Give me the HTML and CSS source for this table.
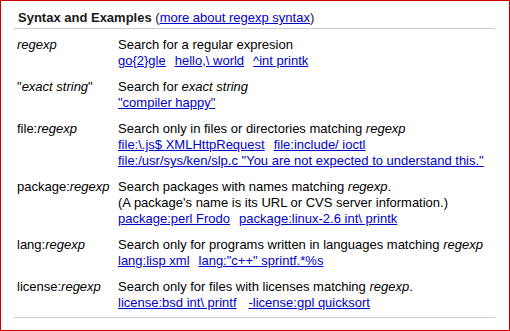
FILE: index.html
```html
<!DOCTYPE html>
<html>
<head>
<meta charset="utf-8">
<link rel="stylesheet" href="styles.css">
</head>
<body>
<div class="frame">
  <div class="panel">
    <div class="head"><b>Syntax and Examples</b> (<a href="#">more about regexp syntax</a>)</div>
    <div class="rows">
      <div class="label"><i>regexp</i></div>
      <div class="desc">
        <div>Search for a regular expresion</div>
        <div class="links"><a href="#">go{2}gle</a><a href="#">hello,\ world</a><a href="#">^int printk</a></div>
      </div>

      <div class="label">"<i>exact string</i>"</div>
      <div class="desc">
        <div>Search for <i>exact string</i></div>
        <div class="links"><a href="#">"compiler happy"</a></div>
      </div>

      <div class="label">file:<i>regexp</i></div>
      <div class="desc">
        <div>Search only in files or directories matching <i>regexp</i></div>
        <div class="links"><a href="#">file:\.js$ XMLHttpRequest</a><a href="#">file:include/ ioctl</a><a href="#">file:/usr/sys/ken/slp.c "You are not expected to understand this."</a></div>
      </div>

      <div class="label">package:<i>regexp</i></div>
      <div class="desc">
        <div>Search packages with names matching <i>regexp</i>.</div>
        <div>(A package's name is its URL or CVS server information.)</div>
        <div class="links"><a href="#">package:perl Frodo</a><a href="#">package:linux-2.6 int\ printk</a></div>
      </div>

      <div class="label">lang:<i>regexp</i></div>
      <div class="desc">
        <div>Search only for programs written in languages matching <i>regexp</i></div>
        <div class="links"><a href="#">lang:lisp xml</a><a href="#">lang:"c++" sprintf.*%s</a></div>
      </div>

      <div class="label">license:<i>regexp</i></div>
      <div class="desc">
        <div>Search only for files with licenses matching <i>regexp</i>.</div>
        <div class="links wide"><a href="#">license:bsd int\ printf</a><a href="#">-license:gpl quicksort</a></div>
      </div>
    </div>
  </div>
</div>
</body>
</html>
```

FILE: styles.css
```css
html, body {
  margin: 0;
  padding: 0;
  background: #fff;
}

body {
  font-family: "Liberation Sans", Arial, sans-serif;
  font-size: 13px;
  line-height: 16px;
  color: #000;
}

.frame {
  width: 510px;
  height: 331px;
  box-sizing: border-box;
  border: 1px solid #cc0000;
  padding: 9px 14px 0 13px;
}

.panel {
  border-bottom: 1px solid #cccccc;
  padding-bottom: 6px;
}

.head {
  padding: 0 0 2px 4px;
  border-bottom: 1px solid #cccccc;
  color: #1a1a1a;
}

.head b {
  font-weight: bold;
}

a {
  color: #0000cc;
  text-decoration: underline;
}

.rows {
  display: grid;
  grid-template-columns: 101px 1fr;
  row-gap: 10px;
  padding: 8px 0 0 3px;
}

.label {
  white-space: nowrap;
}

.links {
  display: flex;
  flex-wrap: wrap;
  column-gap: 9px;
}

.links.wide {
  column-gap: 12px;
}

.links a {
  white-space: nowrap;
}
```
